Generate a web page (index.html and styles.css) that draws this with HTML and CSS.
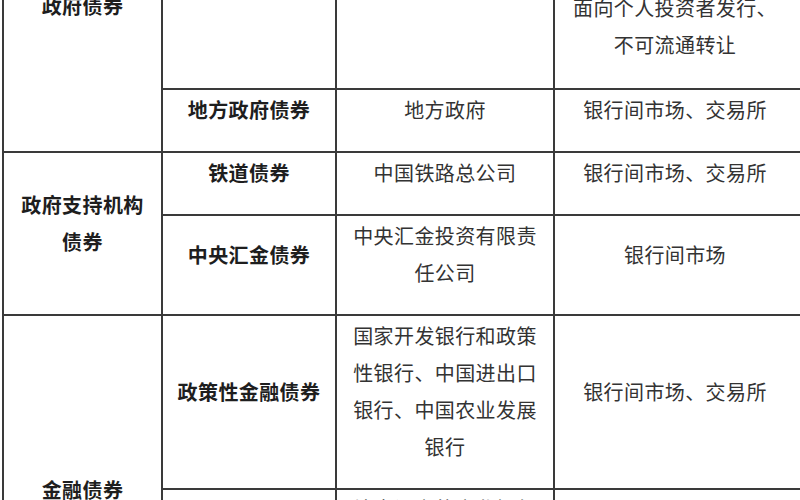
FILE: index.html
```html
<!DOCTYPE html>
<html lang="zh-CN">
<head>
<meta charset="utf-8">
<title>债券分类</title>
<link rel="stylesheet" href="styles.css">
</head>
<body>
<table class="bonds">
  <colgroup>
    <col class="c1"><col class="c2"><col class="c3"><col class="c4">
  </colgroup>
  <tr class="row-a">
    <td class="cat" rowspan="2">政府债券</td>
    <td class="type"></td>
    <td class="issuer"></td>
    <td class="market at-bottom">面向个人投资者发行、<br>不可流通转让</td>
  </tr>
  <tr>
    <td class="type">地方政府债券</td>
    <td class="issuer">地方政府</td>
    <td class="market">银行间市场、交易所</td>
  </tr>
  <tr>
    <td class="cat" rowspan="2">政府支持机构<br>债券</td>
    <td class="type">铁道债券</td>
    <td class="issuer">中国铁路总公司</td>
    <td class="market">银行间市场、交易所</td>
  </tr>
  <tr>
    <td class="type">中央汇金债券</td>
    <td class="issuer">中央汇金投资有限责<br>任公司</td>
    <td class="market">银行间市场</td>
  </tr>
  <tr>
    <td class="cat" rowspan="2">金融债券</td>
    <td class="type">政策性金融债券</td>
    <td class="issuer">国家开发银行和政策<br>性银行、中国进出口<br>银行、中国农业发展<br>银行</td>
    <td class="market">银行间市场、交易所</td>
  </tr>
  <tr class="row-f">
    <td class="type"></td>
    <td class="issuer at-top">境内设立的商业银行</td>
    <td class="market"></td>
  </tr>
</table>
</body>
</html>
```
FILE: styles.css
```css
html, body {
  margin: 0;
  padding: 0;
  background: #ffffff;
}
body {
  width: 800px;
  height: 500px;
  overflow: hidden;
  font-family: "Noto Sans CJK SC", "Noto Sans", sans-serif;
}
.bonds {
  border-collapse: collapse;
  table-layout: fixed;
  width: 799px;
  margin: -120px 0 0 2px;
  font-size: 20px;
  letter-spacing: 0.4px;
  line-height: 37px;
  color: #333333;
}
.c1 { width: 159px; }
.c2 { width: 174px; }
.c3 { width: 218px; }
.c4 { width: 248px; }
.bonds td {
  border: 2px solid #3a3a3a;
  padding: 1px 8px 23px;
  text-align: center;
  vertical-align: middle;
}
.bonds .cat,
.bonds .type {
  font-weight: 700;
  color: #1e1e1e;
}
.bonds .market {
  padding-right: 14px;
}
.row-a td {
  height: 180px;
}
.row-a .at-bottom {
  padding-bottom: 25px;
}
.row-f td {
  height: 170px;
}
.bonds .at-top {
  vertical-align: top;
  padding-top: 0;
}
.bonds .at-bottom {
  vertical-align: bottom;
}
```
